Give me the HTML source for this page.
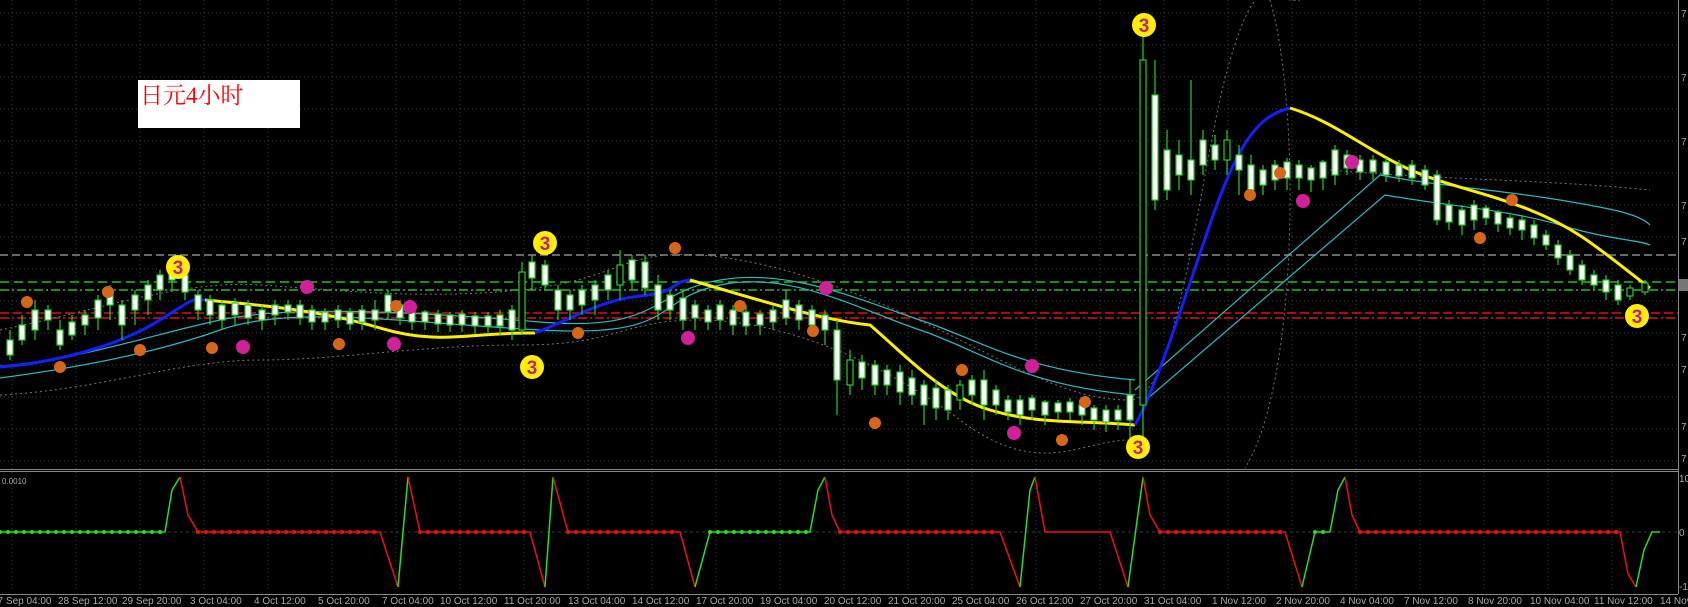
<!DOCTYPE html>
<html><head><meta charset="utf-8"><style>
html,body{margin:0;padding:0;background:#000;}
svg{display:block}
</style></head><body>
<svg width="1688" height="607" viewBox="0 0 1688 607" xmlns="http://www.w3.org/2000/svg" font-family="Liberation Sans, sans-serif">
<rect width="1688" height="607" fill="#000"/>
<g stroke="#3a3f3a" stroke-width="1" stroke-dasharray="1 3">
<path d="M12 0V590M76 0V590M140 0V590M204 0V590M268 0V590M332 0V590M396 0V590M460 0V590M524 0V590M588 0V590M652 0V590M716 0V590M780 0V590M844 0V590M908 0V590M972 0V590M1036 0V590M1100 0V590M1164 0V590M1228 0V590M1292 0V590M1356 0V590M1420 0V590M1484 0V590M1548 0V590M1612 0V590"/>
<path d="M0 13H1678M0 45H1678M0 77H1678M0 109H1678M0 141H1678M0 173H1678M0 205H1678M0 237H1678M0 269H1678M0 301H1678M0 333H1678M0 365H1678M0 397H1678M0 429H1678M0 461H1678"/>
</g>
<g stroke-width="1.5" fill="none">
<path d="M0 255H1678" stroke="#8a8a8a" stroke-dasharray="8 4"/>
<path d="M0 282H1678" stroke="#22c022" stroke-dasharray="9 5"/>
<path d="M0 290H1678" stroke="#22c022" stroke-dasharray="9 3 2 3"/>
<path d="M0 313H1678" stroke="#e01010" stroke-dasharray="9 4"/>
<path d="M0 318H1678" stroke="#e01010" stroke-dasharray="9 3 2 3"/>
</g>
<g fill="none" stroke="#777" stroke-width="1" stroke-dasharray="2 3">
<path d="M0 330C100 310 180 280 260 285S420 300 520 290 620 250 700 255 880 300 960 340 1080 400 1130 400 1200 160 1230 60 1270 5 1300 0"/>
<path d="M0 395C100 390 180 360 260 360S420 345 520 345 620 320 700 320 880 360 960 420 1080 440 1130 440"/>
<path d="M1270 0C1300 100 1300 380 1245 468"/>
<path d="M1330 170C1450 180 1550 180 1650 190"/>
</g>
<g fill="none" stroke="#2fb8c0" stroke-width="1.2">
<path d="M0 378C60 370 150 355 220 330S400 322 540 330 650 300 720 285 860 310 920 330 1020 385 1135 395"/>
<path d="M0 366C80 360 150 335 220 320S420 312 540 322 650 292 720 280 860 300 920 320 1020 370 1135 380"/>
<path d="M1135 390L1380 175C1430 185 1500 190 1560 200S1640 215 1650 225"/>
<path d="M1140 405L1385 195C1440 205 1510 210 1560 225S1640 240 1650 245"/>
</g>
<g fill="none" stroke-width="3">
<path d="M0 367C60 362 120 345 160 320S190 300 205 300" stroke="#1020ff"/>
<path d="M205 300C260 305 320 310 380 328S470 332 535 333" stroke="#ffee00"/>
<path d="M535 333C570 320 600 300 640 296S670 282 690 280" stroke="#1020ff"/>
<path d="M690 280C760 300 820 320 870 325C900 350 940 395 990 410S1080 420 1135 425" stroke="#ffee00"/>
<path d="M1135 425C1160 380 1190 280 1215 210S1260 115 1290 108" stroke="#1020ff"/>
<path d="M1290 108C1330 120 1360 145 1400 165S1480 190 1530 210 1600 250 1650 288" stroke="#ffee00"/>
</g>
<g stroke="#22d022" stroke-width="1.2" fill="#fff">
<path fill="none" d="M10 330V360M22 315V345M35 300V340M48 305V330M60 320V350M72 315V340M85 310V335M98 295V330M110 285V320M122 300V340M135 290V325M148 280V315M160 270V300M172 262V290M185 270V300M198 290V320M210 295V325M222 300V330M235 298V325M248 300V325M262 305V330M275 300V325M288 300V320M300 300V325M312 305V330M325 308V330M338 305V328M350 308V330M362 305V330M375 300V330M388 290V320M400 300V325M412 305V330M425 310V330M438 310V332M450 312V332M462 310V332M475 312V334M488 312V334M500 310V335M512 305V340M522 262V335M532 255V290M545 260V290M558 285V320M570 290V320M582 285V315M595 280V315M608 270V300M620 250V300M632 255V290M645 255V295M658 275V320M670 290V320M683 290V330M695 300V330M708 305V330M720 300V330M733 305V335M746 305V335M760 310V335M773 305V330M786 290V325M799 300V330M812 305V335M825 310V345M837 320V415M850 350V395M862 355V390M875 360V395M887 365V395M900 365V405M912 370V405M924 380V425M936 380V420M948 385V420M960 380V410M972 375V405M984 370V420M996 385V415M1008 395V420M1020 395V425M1032 395V420M1045 400V425M1058 400V420M1070 398V420M1082 402V425M1094 405V430M1106 405V432M1118 405V430M1130 380V445M1143 35V450M1155 60V210M1167 130V200M1179 140V190M1191 80V195M1203 130V175M1215 135V170M1227 130V175M1239 145V195M1251 155V200M1263 165V195M1275 160V190M1287 158V190M1299 160V190M1311 165V192M1323 160V190M1335 145V185M1347 150V175M1360 155V180M1373 155V180M1386 158V182M1399 160V182M1412 160V185M1425 165V190M1437 170V225M1449 200V230M1462 205V235M1474 200V230M1486 205V225M1498 210V232M1510 215V235M1522 215V240M1534 220V245M1546 230V250M1558 240V265M1570 250V275M1582 260V285M1594 270V290M1606 275V300M1618 280V305M1630 285V300M1645 280V295"/>
<rect x="7" y="340" width="6" height="15"/><rect x="19" y="325" width="6" height="15"/><rect x="32" y="310" width="6" height="20"/><rect x="45" y="310" width="6" height="10"/><rect x="57" y="330" width="6" height="15"/><rect x="69" y="322" width="6" height="13"/><rect x="82" y="315" width="6" height="10"/><rect x="95" y="300" width="6" height="18"/><rect x="107" y="290" width="6" height="15"/><rect x="119" y="305" width="6" height="20"/><rect x="132" y="295" width="6" height="15"/><rect x="145" y="285" width="6" height="15"/><rect x="157" y="275" width="6" height="15"/><rect x="169" y="265" width="6" height="15"/><rect x="182" y="275" width="6" height="17"/><rect x="195" y="295" width="6" height="15"/><rect x="207" y="300" width="6" height="15"/><rect x="219" y="305" width="6" height="15"/><rect x="232" y="303" width="6" height="12"/><rect x="245" y="305" width="6" height="13"/><rect x="259" y="310" width="6" height="10"/><rect x="272" y="305" width="6" height="10"/><rect x="285" y="305" width="6" height="7"/><rect x="297" y="305" width="6" height="13"/><rect x="309" y="310" width="6" height="12"/><rect x="322" y="312" width="6" height="10"/><rect x="335" y="310" width="6" height="10"/><rect x="347" y="312" width="6" height="12"/><rect x="359" y="310" width="6" height="12"/><rect x="372" y="310" width="6" height="10"/><rect x="385" y="295" width="6" height="17"/><rect x="397" y="305" width="6" height="13"/><rect x="409" y="310" width="6" height="12"/><rect x="422" y="312" width="6" height="10"/><rect x="435" y="314" width="6" height="10"/><rect x="447" y="315" width="6" height="10"/><rect x="459" y="314" width="6" height="11"/><rect x="472" y="316" width="6" height="10"/><rect x="485" y="316" width="6" height="10"/><rect x="497" y="315" width="6" height="11"/><rect x="509" y="310" width="6" height="20"/><rect x="519" y="272" width="6" height="58" fill="#000"/><rect x="529" y="262" width="6" height="16"/><rect x="542" y="265" width="6" height="20"/><rect x="555" y="290" width="6" height="20"/><rect x="567" y="295" width="6" height="15"/><rect x="579" y="290" width="6" height="15"/><rect x="592" y="285" width="6" height="15"/><rect x="605" y="275" width="6" height="15"/><rect x="617" y="265" width="6" height="20" fill="#000"/><rect x="629" y="260" width="6" height="20"/><rect x="642" y="262" width="6" height="26"/><rect x="655" y="285" width="6" height="25"/><rect x="667" y="295" width="6" height="15"/><rect x="680" y="298" width="6" height="22"/><rect x="692" y="305" width="6" height="13"/><rect x="705" y="310" width="6" height="12"/><rect x="717" y="305" width="6" height="15"/><rect x="730" y="310" width="6" height="15"/><rect x="743" y="312" width="6" height="14"/><rect x="757" y="314" width="6" height="11"/><rect x="770" y="310" width="6" height="12"/><rect x="783" y="300" width="6" height="18"/><rect x="796" y="305" width="6" height="15"/><rect x="809" y="310" width="6" height="15"/><rect x="822" y="315" width="6" height="15"/><rect x="834" y="330" width="6" height="50"/><rect x="847" y="360" width="6" height="25" fill="#000"/><rect x="859" y="362" width="6" height="16"/><rect x="872" y="365" width="6" height="20"/><rect x="884" y="370" width="6" height="15"/><rect x="897" y="372" width="6" height="20"/><rect x="909" y="378" width="6" height="17"/><rect x="921" y="385" width="6" height="20"/><rect x="933" y="388" width="6" height="20"/><rect x="945" y="390" width="6" height="20"/><rect x="957" y="385" width="6" height="15" fill="#000"/><rect x="969" y="380" width="6" height="15"/><rect x="981" y="380" width="6" height="25"/><rect x="993" y="390" width="6" height="15"/><rect x="1005" y="400" width="6" height="12"/><rect x="1017" y="400" width="6" height="15"/><rect x="1029" y="398" width="6" height="12"/><rect x="1042" y="402" width="6" height="13"/><rect x="1055" y="403" width="6" height="9"/><rect x="1067" y="402" width="6" height="10"/><rect x="1079" y="405" width="6" height="10"/><rect x="1091" y="408" width="6" height="12"/><rect x="1103" y="410" width="6" height="12"/><rect x="1115" y="410" width="6" height="10"/><rect x="1127" y="395" width="6" height="25"/><rect x="1140" y="60" width="6" height="345" fill="#000"/><rect x="1152" y="95" width="6" height="105"/><rect x="1164" y="150" width="6" height="40"/><rect x="1176" y="155" width="6" height="20"/><rect x="1188" y="160" width="6" height="20"/><rect x="1200" y="140" width="6" height="25"/><rect x="1212" y="145" width="6" height="15"/><rect x="1224" y="140" width="6" height="20" fill="#000"/><rect x="1236" y="155" width="6" height="15"/><rect x="1248" y="165" width="6" height="25"/><rect x="1260" y="170" width="6" height="15"/><rect x="1272" y="165" width="6" height="15"/><rect x="1284" y="162" width="6" height="16"/><rect x="1296" y="165" width="6" height="13"/><rect x="1308" y="168" width="6" height="12"/><rect x="1320" y="162" width="6" height="16"/><rect x="1332" y="150" width="6" height="25"/><rect x="1344" y="155" width="6" height="13"/><rect x="1357" y="160" width="6" height="12"/><rect x="1370" y="160" width="6" height="12"/><rect x="1383" y="162" width="6" height="13"/><rect x="1396" y="165" width="6" height="11"/><rect x="1409" y="165" width="6" height="13"/><rect x="1422" y="170" width="6" height="15"/><rect x="1434" y="175" width="6" height="45"/><rect x="1446" y="205" width="6" height="17"/><rect x="1459" y="210" width="6" height="15"/><rect x="1471" y="205" width="6" height="15"/><rect x="1483" y="208" width="6" height="10"/><rect x="1495" y="212" width="6" height="12"/><rect x="1507" y="218" width="6" height="10"/><rect x="1519" y="220" width="6" height="10"/><rect x="1531" y="225" width="6" height="13"/><rect x="1543" y="235" width="6" height="10"/><rect x="1555" y="245" width="6" height="13"/><rect x="1567" y="255" width="6" height="15"/><rect x="1579" y="265" width="6" height="15"/><rect x="1591" y="275" width="6" height="10"/><rect x="1603" y="280" width="6" height="12"/><rect x="1615" y="285" width="6" height="15"/><rect x="1627" y="288" width="6" height="8" fill="#000"/><rect x="1642" y="283" width="6" height="9" fill="#000"/>
</g>
<g>
<g fill="#d8661a"><circle cx="27" cy="302" r="6"/><circle cx="108" cy="292" r="6"/><circle cx="60" cy="367" r="6"/><circle cx="140" cy="350" r="6"/><circle cx="212" cy="348" r="6"/><circle cx="339" cy="344" r="6"/><circle cx="396" cy="306" r="6"/><circle cx="578" cy="333" r="6"/><circle cx="675" cy="248" r="6"/><circle cx="740" cy="306" r="6"/><circle cx="813" cy="331" r="6"/><circle cx="875" cy="423" r="6"/><circle cx="962" cy="370" r="6"/><circle cx="1062" cy="440" r="6"/><circle cx="1085" cy="402" r="6"/><circle cx="1250" cy="195" r="6"/><circle cx="1280" cy="173" r="6"/><circle cx="1480" cy="238" r="6"/><circle cx="1512" cy="200" r="6"/></g>
<g fill="#d0209a"><circle cx="243" cy="347" r="7"/><circle cx="307" cy="287" r="7"/><circle cx="394" cy="344" r="7"/><circle cx="410" cy="307" r="7"/><circle cx="688" cy="338" r="7"/><circle cx="826" cy="288" r="7"/><circle cx="1014" cy="433" r="7"/><circle cx="1032" cy="366" r="7"/><circle cx="1303" cy="201" r="7"/><circle cx="1352" cy="162" r="7"/></g>
</g>
<g fill="#ffee00" font-size="19" font-weight="bold" text-anchor="middle">
<circle cx="1144" cy="25" r="12"/><circle cx="545" cy="243" r="12"/><circle cx="178" cy="267" r="12"/><circle cx="532" cy="367" r="12"/><circle cx="1138" cy="447" r="12"/><circle cx="1637" cy="316" r="12"/>
<g fill="#c0208a"><text x="1144" y="32">3</text><text x="545" y="250">3</text><text x="178" y="274">3</text><text x="532" y="374">3</text><text x="1138" y="454">3</text><text x="1637" y="323">3</text></g>
</g>
<rect x="138" y="80" width="162" height="48" fill="#fff"/>
<text x="140" y="103" font-size="23" fill="#f00" font-family="Liberation Serif, 'Noto Serif CJK SC', serif">日元4小时</text>
<path d="M0 469.5H1678M0 471.5H1678" stroke="#888" stroke-width="1"/>
<path d="M1678.5 0V594M0 594.5H1678" stroke="#888"/>
<path d="M0 532H1678" stroke="#2a4040" stroke-dasharray="3 3"/>
<g fill="none" stroke-width="1.5">
<path d="M0 532H165L172 490L180 477" stroke="#22e022"/>
<path d="M180 477L188 515L198 532H380L398 587" stroke="#f01010"/>
<path d="M398 587L408 477" stroke="#22e022"/>
<path d="M408 477L420 532H530L545 587" stroke="#f01010"/>
<path d="M545 587L553 477" stroke="#22e022"/>
<path d="M553 477L568 532H680L695 587" stroke="#f01010"/>
<path d="M695 587L710 532H810L818 490L825 477" stroke="#22e022"/>
<path d="M825 477L832 515L840 532H1000L1020 587" stroke="#f01010"/>
<path d="M1020 587L1030 490L1035 477" stroke="#22e022"/>
<path d="M1035 477L1045 532H1110L1128 587" stroke="#f01010"/>
<path d="M1128 587L1143 477" stroke="#22e022"/>
<path d="M1143 477L1150 515L1160 532H1285L1302 587" stroke="#f01010"/>
<path d="M1302 587L1315 532H1330L1338 490L1345 477" stroke="#22e022"/>
<path d="M1345 477L1352 515L1360 532H1620L1628 574L1636 587" stroke="#f01010"/>
<path d="M1636 587L1644 550L1652 532H1660" stroke="#22e022"/>
</g>
<g fill="none" stroke-width="4" stroke-linecap="round" stroke-dasharray="0 8">
<path d="M0 532H165" stroke="#22e022"/><path d="M710 532H810" stroke="#22e022"/><path d="M1315 532H1330" stroke="#22e022"/>
<path d="M198 532H380" stroke="#f01010"/><path d="M420 532H530" stroke="#f01010"/><path d="M568 532H680" stroke="#f01010"/><path d="M840 532H1000" stroke="#f01010"/><path d="M1160 532H1285" stroke="#f01010"/><path d="M1360 532H1620" stroke="#f01010"/>
</g>
<g fill="#aaa" font-size="10">
<text x="1681" y="17">7</text><text x="1681" y="81">7</text><text x="1681" y="145">7</text><text x="1681" y="209">7</text><text x="1681" y="245">7</text><text x="1681" y="341">7</text><text x="1681" y="373">7</text><text x="1681" y="430">7</text><text x="1681" y="462">7</text>
<rect x="1679" y="279" width="9" height="12" fill="#777"/>
<text x="1679" y="482">10</text><text x="1679" y="536">0</text><text x="1679" y="590">-1</text>
<text x="2" y="484" font-size="8">0.0010</text>
</g>
<g fill="#aaa" font-size="10">
<text x="-8" y="604">27 Sep 04:00</text><text x="58" y="604">28 Sep 12:00</text><text x="122" y="604">29 Sep 20:00</text><text x="190" y="604">3 Oct 04:00</text><text x="254" y="604">4 Oct 12:00</text><text x="318" y="604">5 Oct 20:00</text><text x="382" y="604">7 Oct 04:00</text><text x="440" y="604">10 Oct 12:00</text><text x="504" y="604">11 Oct 20:00</text><text x="568" y="604">13 Oct 04:00</text><text x="632" y="604">14 Oct 12:00</text><text x="696" y="604">17 Oct 20:00</text><text x="760" y="604">19 Oct 04:00</text><text x="824" y="604">20 Oct 12:00</text><text x="888" y="604">21 Oct 20:00</text><text x="952" y="604">25 Oct 04:00</text><text x="1016" y="604">26 Oct 12:00</text><text x="1080" y="604">27 Oct 20:00</text><text x="1144" y="604">31 Oct 04:00</text><text x="1212" y="604">1 Nov 12:00</text><text x="1276" y="604">2 Nov 20:00</text><text x="1340" y="604">4 Nov 04:00</text><text x="1404" y="604">7 Nov 12:00</text><text x="1468" y="604">8 Nov 20:00</text><text x="1530" y="604">10 Nov 04:00</text><text x="1594" y="604">11 Nov 12:00</text><text x="1660" y="604">14 Nov</text>
</g>
</svg>
</body></html>
